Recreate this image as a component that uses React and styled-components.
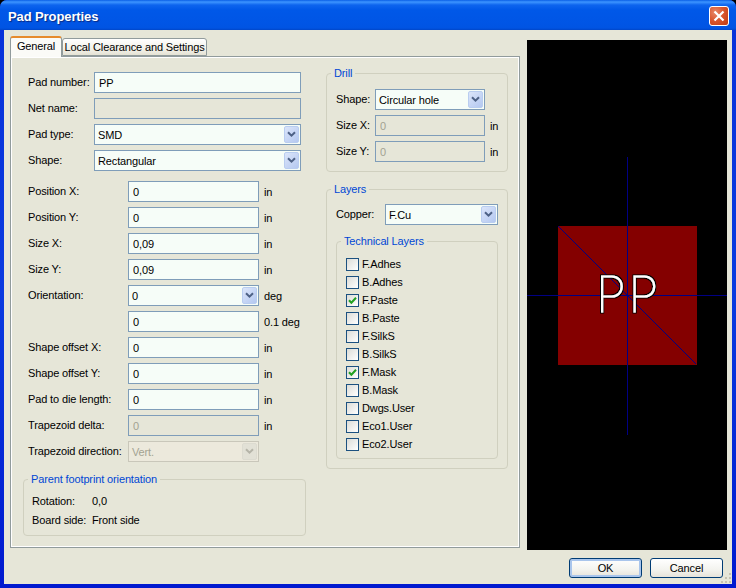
import React from 'react';
import styled, { createGlobalStyle } from 'styled-components';

const Global = createGlobalStyle`
  html, body { margin: 0; padding: 0; background: #000; }
  body { font-family: "Liberation Sans", "DejaVu Sans", sans-serif; font-size: 11px; letter-spacing: -0.13px; color: #000; }
`;

const Window = styled.div`
  width: 736px; height: 588px; display: flex; flex-direction: column;
  background: linear-gradient(180deg, #0831d9 0%, #0a3be0 50%, #0019cf 100%);
  border-radius: 7px 7px 0 0; overflow: hidden; box-sizing: border-box;
`;
const TitleBar = styled.div`
  height: 30px; flex: none; display: flex; align-items: center; justify-content: space-between;
  padding: 0 7px 0 8px; box-sizing: border-box;
  background: linear-gradient(180deg, #0a5fe6 0, #3d95ff 2px, #0d64ee 5px, #0058e8 10px, #0055e5 24px, #0054e3 28px, #0046c8 30px);
`;
const Title = styled.span`
  font: bold 13px "Liberation Sans", "Noto Sans", sans-serif; color: #fff; text-shadow: 1px 1px 1px #0a2a80; letter-spacing: -0.1px;
  padding-top: 3px;
`;
const CloseButton = styled.div`
  width: 20px; height: 20px; border: 1px solid #fff; border-radius: 3px; box-sizing: border-box; margin-top: 2px;
  display: flex; align-items: center; justify-content: center;
  background: radial-gradient(circle at 30% 30%, #e8896a 0%, #d9572f 45%, #c03a10 100%);
`;
const Body = styled.div`
  flex: 1; margin: 0 4px 4px; padding: 6px 5px 0 6px; background: #e6e6d8; position: relative;
  display: flex; flex-direction: column; min-height: 0;
`;
const Main = styled.div` display: flex; align-items: flex-start; `;
const Notebook = styled.div` width: 510px; flex: none; `;
const Tabs = styled.div` height: 20px; display: flex; align-items: flex-end; `;
const Tab = styled.div`
  box-sizing: border-box; position: relative; display: flex; align-items: center; justify-content: center; white-space: nowrap;
  width: ${p => p.$w}px; height: ${p => (p.$active ? 21 : 18)}px;
  margin-bottom: ${p => (p.$active ? -1 : 0)}px; z-index: ${p => (p.$active ? 2 : 0)};
  padding-bottom: ${p => (p.$active ? 3 : 0)}px;
  background: ${p => (p.$active ? '#fbfbf7' : 'linear-gradient(180deg, #fff, #f0efe6 70%, #e4e2d4)')};
  border: 1px solid #919b9c; border-bottom: ${p => (p.$active ? 'none' : '1px solid #919b9c')};
  border-radius: 3px 3px 0 0;
  border-top: ${p => (p.$active ? '2px solid #e68b2c' : '1px solid #919b9c')};
`;
const Panel = styled.div`
  box-sizing: border-box; height: 492px; padding: 15px 11px 0 12px; display: flex; gap: 20px; align-items: flex-start;
  border: 1px solid #919b9c; box-shadow: inset 1px 1px 0 #fff, inset -1px -1px 0 #fff; background: #e6e6d8;
`;
const LeftColumn = styled.div` width: 283px; flex: none; `;
const RightColumn = styled.div` width: 182px; flex: none; padding-top: 1px; `;
const Fields = styled.div`
  display: grid; grid-template-columns: ${p => p.$columns}; grid-auto-rows: 21px; row-gap: 5px;
  align-items: center; padding-left: ${p => p.$indent ?? 0}px; margin-bottom: ${p => p.$after ?? 0}px;
`;
const Label = styled.span` white-space: nowrap; line-height: 21px; height: 21px; `;
const Unit = styled.span` white-space: nowrap; padding-left: 5px; `;
const TextInput = styled.input`
  box-sizing: border-box; height: 21px; width: ${p => p.$w}px; padding: 0 4px; margin: 0; outline: none;
  font: inherit; letter-spacing: inherit; border: 1px solid #7f9db9; border-radius: 0;
  background: ${p => (p.disabled ? '#e6e6d8' : '#f6fdf8')}; color: ${p => (p.disabled ? '#a3a392' : '#000')};
`;
const Combo = styled.div`
  box-sizing: border-box; height: 21px; width: ${p => p.$w}px; padding: 1px 1px 1px 3px;
  display: flex; align-items: center; justify-content: space-between;
  border: 1px solid ${p => (p.$disabled ? '#c9c7ba' : '#7f9db9')};
  background: ${p => (p.$disabled ? '#ece9dc' : '#f6fdf8')}; color: ${p => (p.$disabled ? '#a3a392' : '#000')};
`;
const ComboArrow = styled.div`
  width: 15px; height: 17px; flex: none; display: flex; align-items: center; justify-content: center; box-sizing: border-box;
  border-radius: 2px; border: 1px solid ${p => (p.$disabled ? '#dcdbd0' : '#b9cdf0')};
  background: ${p => (p.$disabled ? '#e2e1d6' : 'linear-gradient(135deg, #dbe5fa, #b4c8f0)')};
`;
const Group = styled.div`
  box-sizing: border-box; position: relative; height: ${p => p.$h}px; margin-top: ${p => p.$top ?? 0}px;
  padding: ${p => p.$pad}; border: 1px solid #d0d0bf; border-radius: 4px;
`;
const Legend = styled.span`
  position: absolute; top: -8px; left: 4px; padding: 0 3px; background: #e6e6d8; color: #0046d5; line-height: 15px; white-space: nowrap;
`;
const InfoRow = styled.div`
  display: grid; grid-template-columns: 60px auto; justify-content: start; height: 19px; line-height: 19px;
`;
const CheckRow = styled.div` height: 18px; display: flex; align-items: center; gap: 3px; `;
const CheckBox = styled.div`
  box-sizing: border-box; width: 13px; height: 13px; flex: none; display: flex; align-items: center; justify-content: center;
  border: 1px solid #1c5180; background: linear-gradient(135deg, #dcdcd7, #fff);
`;
const Preview = styled.svg` flex: none; display: block; margin: 4px 0 0 7px; width: 200px; height: 510px; background: #000; `;
const PreviewText = styled.text`
  font-family: "Inter", "Roboto", sans-serif; font-weight: 100; font-size: 49px; fill: #fff;
  stroke: #fff; stroke-width: 1px; filter: url(#pad-text-outline);
`;
const Footer = styled.div` display: flex; justify-content: flex-end; gap: 8px; padding: 8px 4px 0 0; `;
const Button = styled.div`
  box-sizing: border-box; width: 73px; height: 20px; display: flex; align-items: center; justify-content: center;
  border: 1px solid #003c74; border-radius: 3px; background: linear-gradient(180deg, #fff, #f3f3ee 60%, #e6e3da);
  box-shadow: ${p => (p.$default ? 'inset 0 0 0 2px #a9c5ec' : 'none')};
`;
const Grip = styled.svg` position: absolute; right: 0; bottom: 0; width: 12px; height: 12px; `;

const Chevron = ({ disabled }) => (
  <svg width="9" height="7" viewBox="0 0 9 7">
    <path d="M1 1.2 L4.5 4.7 L8 1.2" fill="none" stroke={disabled ? '#b5b4a8' : '#4d6185'} strokeWidth="2" />
  </svg>
);
const Select = ({ w, value, disabled }) => (
  <Combo $w={w} $disabled={disabled}>
    <span>{value}</span>
    <ComboArrow $disabled={disabled}><Chevron disabled={disabled} /></ComboArrow>
  </Combo>
);
const Field = ({ w, value, disabled }) => (
  <TextInput $w={w} value={value} disabled={disabled} readOnly />
);

const layers = [
  ['F.Adhes'], ['B.Adhes'], ['F.Paste', true], ['B.Paste'], ['F.SilkS'], ['B.SilkS'],
  ['F.Mask', true], ['B.Mask'], ['Dwgs.User'], ['Eco1.User'], ['Eco2.User'],
];

export default function App() {
  return (
    <Window>
      <Global />
      <TitleBar>
        <Title>Pad Properties</Title>
        <CloseButton>
          <svg width="12" height="12" viewBox="0 0 12 12">
            <path d="M1.5 1.5 L10.5 10.5 M10.5 1.5 L1.5 10.5" stroke="#fff" strokeWidth="2.2" />
          </svg>
        </CloseButton>
      </TitleBar>
      <Body>
        <Main>
          <Notebook>
            <Tabs>
              <Tab $active $w={52}>General</Tab>
              <Tab $w={145}>Local Clearance and Settings</Tab>
            </Tabs>
            <Panel>
              <LeftColumn>
                <Fields $columns="66px 207px" $indent={5} $after={10}>
                  <Label>Pad number:</Label><Field w={207} value="PP" />
                  <Label>Net name:</Label><Field w={207} value="" disabled />
                  <Label>Pad type:</Label><Select w={207} value="SMD" />
                  <Label>Shape:</Label><Select w={207} value="Rectangular" />
                </Fields>
                <Fields $columns="100px 131px auto" $indent={5}>
                  <Label>Position X:</Label><Field w={131} value="0" /><Unit>in</Unit>
                  <Label>Position Y:</Label><Field w={131} value="0" /><Unit>in</Unit>
                  <Label>Size X:</Label><Field w={131} value="0,09" /><Unit>in</Unit>
                  <Label>Size Y:</Label><Field w={131} value="0,09" /><Unit>in</Unit>
                  <Label>Orientation:</Label><Select w={131} value="0" /><Unit>deg</Unit>
                  <span /><Field w={131} value="0" /><Unit>0.1 deg</Unit>
                  <Label>Shape offset X:</Label><Field w={131} value="0" /><Unit>in</Unit>
                  <Label>Shape offset Y:</Label><Field w={131} value="0" /><Unit>in</Unit>
                  <Label>Pad to die length:</Label><Field w={131} value="0" /><Unit>in</Unit>
                  <Label>Trapezoid delta:</Label><Field w={131} value="0" disabled /><Unit>in</Unit>
                  <Label>Trapezoid direction:</Label><Select w={131} value="Vert." disabled /><span />
                </Fields>
                <Group $h={57} $top={17} $pad="12px 8px 0">
                  <Legend>Parent footprint orientation</Legend>
                  <InfoRow><span>Rotation:</span><span>0,0</span></InfoRow>
                  <InfoRow><span>Board side:</span><span>Front side</span></InfoRow>
                </Group>
              </LeftColumn>
              <RightColumn>
                <Group $h={99} $pad="15px 9px 0">
                  <Legend>Drill</Legend>
                  <Fields $columns="39px 110px auto">
                    <Label>Shape:</Label><Select w={110} value="Circular hole" /><span />
                    <Label>Size X:</Label><Field w={110} value="0" disabled /><Unit>in</Unit>
                    <Label>Size Y:</Label><Field w={110} value="0" disabled /><Unit>in</Unit>
                  </Fields>
                </Group>
                <Group $h={280} $top={17} $pad="14px 9px 0">
                  <Legend>Layers</Legend>
                  <Fields $columns="49px 113px">
                    <Label>Copper:</Label><Select w={113} value="F.Cu" />
                  </Fields>
                  <Group $h={218} $top={16} $pad="13px 9px 0">
                    <Legend>Technical Layers</Legend>
                    {layers.map(([name, on]) => (
                      <CheckRow key={name}>
                        <CheckBox>
                          {on && (
                            <svg width="9" height="9" viewBox="0 0 9 9">
                              <path d="M1 4.2 L3.4 6.8 L8 1.8" fill="none" stroke="#21a121" strokeWidth="2" />
                            </svg>
                          )}
                        </CheckBox>
                        <span>{name}</span>
                      </CheckRow>
                    ))}
                  </Group>
                </Group>
              </RightColumn>
            </Panel>
          </Notebook>
          <Preview viewBox="527 40 200 510" shapeRendering="crispEdges">
            <defs>
              <filter id="pad-text-outline" x="-10%" y="-10%" width="120%" height="120%">
                <feMorphology in="SourceAlpha" operator="dilate" radius="1" result="outline" />
                <feMerge>
                  <feMergeNode in="outline" />
                  <feMergeNode in="SourceGraphic" />
                </feMerge>
              </filter>
            </defs>
            <rect x="558" y="226" width="139" height="139" fill="#840000" />
            <line x1="627.5" y1="157" x2="627.5" y2="435" stroke="#000084" />
            <line x1="527" y1="295.5" x2="727" y2="295.5" stroke="#000084" />
            <line x1="558" y1="226" x2="696" y2="364" stroke="#000084" />
            <PreviewText x="596" y="312" textLength="62">PP</PreviewText>
          </Preview>
        </Main>
        <Footer>
          <Button $default>OK</Button>
          <Button>Cancel</Button>
        </Footer>
        <Grip viewBox="0 0 12 12">
          <g fill="#c5c2b2">
            <rect x="9" y="1" width="2" height="2" />
            <rect x="5" y="5" width="2" height="2" /><rect x="9" y="5" width="2" height="2" />
            <rect x="1" y="9" width="2" height="2" /><rect x="5" y="9" width="2" height="2" /><rect x="9" y="9" width="2" height="2" />
          </g>
        </Grip>
      </Body>
    </Window>
  );
}
